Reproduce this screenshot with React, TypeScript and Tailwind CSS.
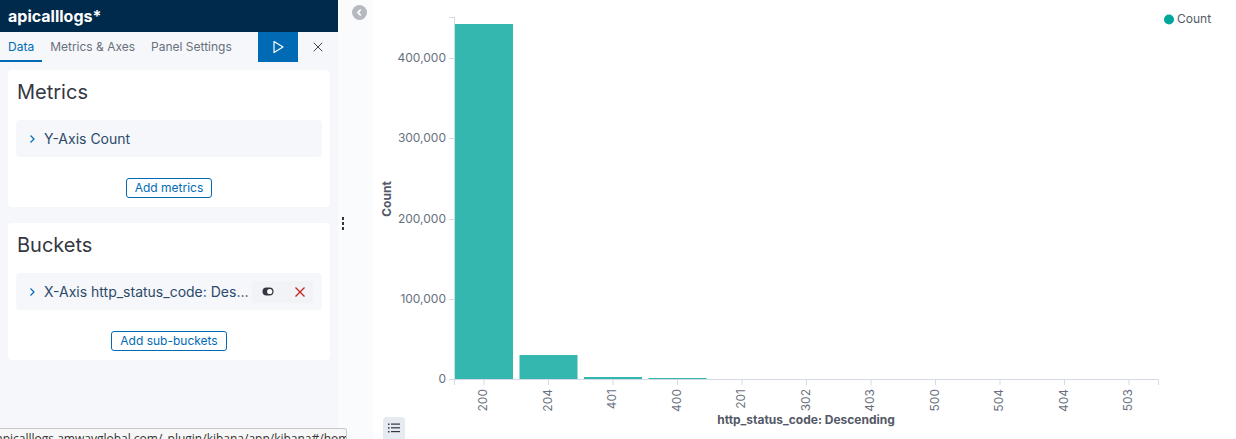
import React from 'react';
import { X } from 'lucide-react';

const bars = [
  { label: '200', top: 24 },
  { label: '204', top: 355 },
  { label: '401', top: 377 },
  { label: '400', top: 378 },
  { label: '201', top: 379 },
  { label: '302', top: 379 },
  { label: '403', top: 379 },
  { label: '500', top: 379 },
  { label: '504', top: 379 },
  { label: '404', top: 379 },
  { label: '503', top: 379 },
];

const yTicks = [
  { y: 58.5, label: '400,000' },
  { y: 138.5, label: '300,000' },
  { y: 219.5, label: '200,000' },
  { y: 299.5, label: '100,000' },
  { y: 379.5, label: '0' },
];

const Chevron = () => (
  <svg width="12" height="12" viewBox="0 0 12 12" className="shrink-0">
    <path d="M4.5 2.5 L8 6 L4.5 9.5" fill="none" stroke="#006bb4" strokeWidth="1.2" />
  </svg>
);

const AggRow: React.FC<{ title: string; actions?: boolean }> = ({ title, actions }) => (
  <div className="flex h-[37px] items-center rounded-[4px] bg-[#f5f7fa] pl-[10px] pr-[9px]">
    <Chevron />
    <span className="ml-[6px] min-w-0 flex-1 truncate text-[14px] text-[#2d4a6b]">{title}</span>
    {actions && (
      <div className="flex h-[22px] w-[61px] shrink-0 items-center gap-[20px] rounded-[3px] bg-[#f1f3f6] pl-[10px]">
        <svg width="12" height="9" viewBox="0 0 12 9">
          <rect x="0.5" y="0.5" width="11" height="8" rx="4" fill="#343741" />
          <circle cx="7.7" cy="4.5" r="2.6" fill="#fff" />
        </svg>
        <svg width="12" height="12" viewBox="0 0 12 12">
          <path d="M1.5 1.5 L10.5 10.5 M10.5 1.5 L1.5 10.5" stroke="#bd271e" strokeWidth="1.3" fill="none" />
        </svg>
      </div>
    )}
  </div>
);

const Card: React.FC<{ title: string; row: string; button: string; actions?: boolean }> = ({
  title,
  row,
  button,
  actions,
}) => (
  <section className="rounded-[4px] bg-white px-2 pb-[9px] pt-2">
    <h2 className="pl-[1px] text-[20px] leading-7 text-[#343741]">{title}</h2>
    <div className="mt-[14px]">
      <AggRow title={row} actions={actions} />
    </div>
    <div className="mt-[21px] flex justify-center">
      <button className="h-[20px] rounded-[3px] border border-[#006bb4] px-[8px] text-[12px] leading-none text-[#006bb4]">
        {button}
      </button>
    </div>
  </section>
);

export default function App() {
  return (
    <div className="relative flex h-[439px] w-[1236px] overflow-hidden bg-white font-['Inter',sans-serif]">
      {/* Sidebar */}
      <aside className="flex w-[338px] shrink-0 flex-col bg-[#f5f7fa]">
        <header className="flex h-8 items-center bg-[#002a4b] px-2 text-[16px] font-bold text-white">
          apicalllogs*
        </header>
        <div className="flex h-[30px]">
          <nav className="flex flex-1 text-[12px]">
            <span className="flex items-center border-b-2 border-[#006bb4] px-2 pt-[2px] text-[#006bb4]">Data</span>
            <span className="flex items-center px-2 text-[#69707d]">Metrics &amp; Axes</span>
            <span className="flex items-center px-2 text-[#69707d]">Panel Settings</span>
          </nav>
          <button className="flex w-10 items-center justify-center bg-[#006bb4]">
            <svg width="14" height="14" viewBox="0 0 14 14">
              <path d="M3 1.5 L12 7 L3 12.5 Z" fill="none" stroke="#fff" strokeWidth="1.2" strokeLinejoin="round" />
            </svg>
          </button>
          <button className="flex w-10 items-center justify-center text-[#343741]">
            <X className="h-[16px] w-[16px]" strokeWidth={1.4} />
          </button>
        </div>
        <div className="flex flex-col gap-4 p-2">
          <Card title="Metrics" row="Y-Axis Count" button="Add metrics" />
          <Card title="Buckets" row="X-Axis http_status_code: Descending" button="Add sub-buckets" actions />
        </div>
      </aside>

      {/* Collapse strip */}
      <div className="relative flex w-[35px] shrink-0 justify-center bg-[#fafbfd] pt-[5px]">
        <div className="ml-[8px] flex h-[15px] w-[15px] items-center justify-center rounded-full bg-[#b5b9c0]">
          <svg width="9" height="9" viewBox="0 0 9 9">
            <path d="M5.8 1.5 L3 4.5 L5.8 7.5" fill="none" stroke="#fff" strokeWidth="1.8" />
          </svg>
        </div>
        <div className="absolute left-[4px] top-[217px] flex flex-col gap-[2px]">
          <span className="h-[3px] w-[2px] bg-[#343741]" />
          <span className="h-[3px] w-[2px] bg-[#343741]" />
          <span className="h-[3px] w-[2px] bg-[#343741]" />
        </div>
      </div>

      {/* Chart */}
      <main className="relative flex-1">
        <svg width="863" height="439" viewBox="373 0 863 439" className="block font-['Inter',sans-serif]">
          <line x1="454.5" y1="17" x2="454.5" y2="380" stroke="#d3dae6" />
          <line x1="449" y1="17.5" x2="454.5" y2="17.5" stroke="#d3dae6" />
          {yTicks.map((t) => (
            <g key={t.label}>
              <line x1="449" y1={t.y} x2="454.5" y2={t.y} stroke="#d3dae6" />
              <text x="446" y={t.y} textAnchor="end" dominantBaseline="middle" fontSize="12" fill="#69707d">
                {t.label}
              </text>
            </g>
          ))}
          <line x1="454" y1="379.5" x2="1158.5" y2="379.5" stroke="#d3dae6" />
          <line x1="454.5" y1="379.5" x2="454.5" y2="385" stroke="#d3dae6" />
          <line x1="1158.5" y1="379.5" x2="1158.5" y2="385" stroke="#d3dae6" />
          {bars.map((b, i) => {
            const cx = 484 + 64.5 * i;
            return (
              <g key={b.label}>
                {b.top < 379 && <rect x={cx - 29} y={b.top} width="58" height={379 - b.top} fill="#33b7ae" />}
                <line x1={cx} y1="380" x2={cx} y2="385" stroke="#d3dae6" />
                <text
                  x={cx}
                  y="389"
                  textAnchor="end"
                  dominantBaseline="middle"
                  fontSize="12"
                  fill="#69707d"
                  transform={`rotate(-90 ${cx} 389)`}
                >
                  {b.label}
                </text>
              </g>
            );
          })}
          <text x="806" y="421" textAnchor="middle" dominantBaseline="middle" fontSize="12" fontWeight="700" fill="#535966">
            http_status_code: Descending
          </text>
          <text
            x="388"
            y="199"
            textAnchor="middle"
            dominantBaseline="middle"
            fontSize="12"
            fontWeight="700"
            fill="#535966"
            transform="rotate(-90 388 199)"
          >
            Count
          </text>
          <circle cx="1169" cy="19.5" r="5" fill="#00a69b" />
          <text x="1177" y="20" dominantBaseline="middle" fontSize="12" fill="#535966">
            Count
          </text>
        </svg>
        <button className="absolute left-[10px] top-[417px] flex h-[22px] w-[22px] items-center justify-center rounded-t-[4px] bg-[#e6ebf2]">
          <svg width="12" height="10" viewBox="0 0 12 10">
            <g fill="#343741">
              <rect x="0" y="0.5" width="1.5" height="1.5" />
              <rect x="3" y="0.5" width="9" height="1.2" />
              <rect x="0" y="4.2" width="1.5" height="1.5" />
              <rect x="3" y="4.2" width="9" height="1.2" />
              <rect x="0" y="8" width="1.5" height="1.5" />
              <rect x="3" y="8" width="9" height="1.2" />
            </g>
          </svg>
        </button>
      </main>

      {/* Browser status bubble */}
      <div className="absolute left-0 top-[428px] h-[20px] w-[347px] overflow-hidden rounded-tr-[3px] border border-l-0 border-[#c9c9c9] bg-[#f7f7f7]">
        <span className="-ml-[4px] block whitespace-nowrap pt-[1px] font-['Open_Sans',sans-serif] text-[12px] text-[#333]">
          apicalllogs.amwayglobal.com/_plugin/kibana/app/kibana#/home
        </span>
      </div>
    </div>
  );
}
